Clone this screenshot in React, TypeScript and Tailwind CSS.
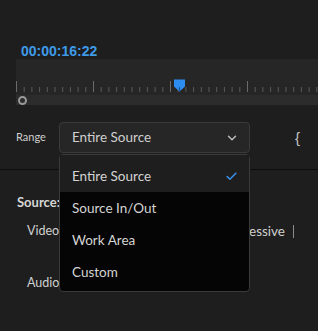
import { ChevronDown, Check } from "lucide-react";

const items = ["Entire Source", "Source In/Out", "Work Area", "Custom"];

// ruler ticks: major every 77px, 10 minor per major
const ticks = Array.from({ length: 40 }, (_, i) => i);

const Ruler = () => (
  <svg width="302" height="36" className="block">
    {ticks.map((i) => {
      const x = 0.5 + i * 7.7;
      const major = i % 10 === 0;
      return (
        <line
          key={i}
          x1={x}
          x2={x}
          y1={major ? 22 : 28}
          y2={33}
          stroke={major ? "#6a6a6a" : "#5a5a5a"}
          strokeWidth="1"
        />
      );
    })}
    <path d="M158 20.5 h11 v7 l-5.5 5 l-5.5 -5 z" fill="#2d8cf0" />
    <line x1="163.5" x2="163.5" y1="28" y2="33" stroke="#1b4f87" strokeWidth="1" />
  </svg>
);

export default function App() {
  return (
    <div
      className="relative w-[318px] h-[331px] overflow-hidden bg-[#1e1e1e] text-[#d0d0d0]"
      style={{ fontFamily: "Lato, 'Noto Sans', sans-serif" }}
    >
      {/* timecode */}
      <div className="h-[59px] pl-[21px] pt-[43px]">
        <p
          className="text-[14px] leading-[16px] font-bold text-[#3d9be9]"
          style={{ fontFamily: "'Liberation Sans', Arial, sans-serif" }}
        >
          00:00:16:22
        </p>
      </div>

      {/* timeline band */}
      <div className="ml-[16px] h-[46px] bg-[#262626] flex flex-col">
        <div className="h-[36px]">
          <Ruler />
        </div>
        <div className="relative h-[10px] bg-[#2c2c2c] flex items-center">
          <div className="ml-[2px] w-[9px] h-[9px] rounded-full border-2 border-[#9a9a9a]" />
        </div>
      </div>

      {/* range row */}
      <div className="mt-[17px] h-[31px] flex items-center">
        <span className="ml-[16px] w-[43px] text-[11px] text-[#cfcfcf]">Range</span>
        <div className="w-[191px] h-[31px] rounded-[4px] border border-[#3a3a3a] bg-[#262626] flex items-center justify-between pl-[12px] pr-[10px]">
          <span className="text-[13.5px] text-[#cfcfcf]">Entire Source</span>
          <ChevronDown size={14} strokeWidth={2.5} className="text-[#bdbdbd]" />
        </div>
        <span
          className="ml-[45px] text-[15px] text-[#c4c4c4] leading-none"
          style={{ fontFamily: "'Liberation Sans', sans-serif" }}
        >
          {"{"}
        </span>
      </div>

      {/* divider */}
      <div className="mt-[16px] h-[1px] bg-[#0e0e0e]" />

      {/* section under the menu */}
      <div className="pt-[24px]">
        <p className="pl-[17px] text-[13px] font-bold text-[#d6d6d6] leading-[16px]">Source:</p>
        <div className="mt-[13px] flex items-center justify-between pl-[27px] pr-[24px] h-[16px]">
          <span className="text-[12.5px] text-[#d0d0d0]">Video</span>
          <span className="text-[13.5px] text-[#d0d0d0] flex items-center gap-[8px]">
            ressive <span className="w-px h-[13px] bg-[#8a8a8a]" />
          </span>
        </div>
        <p className="mt-[36px] pl-[27px] text-[12.5px] text-[#d0d0d0] leading-[16px]">Audio</p>
      </div>

      {/* dropdown menu */}
      <div className="absolute left-[59px] top-[154px] w-[191px] rounded-[4px] border border-[#3a3a3a] bg-[#050505] pb-[3px]">
        {items.map((label, i) => (
          <div
            key={label}
            className={
              i === 0
                ? "h-[37px] pt-[5px] pl-[12px] pr-[11px] flex items-center justify-between bg-[#1e1e1e]"
                : "h-[32px] pl-[12px] pr-[11px] flex items-center"
            }
          >
            <span className="text-[13.5px] text-[#d4d4d4]">{label}</span>
            {i === 0 && <Check size={13} strokeWidth={3} className="text-[#3b8ee6]" />}
          </div>
        ))}
      </div>
    </div>
  );
}
